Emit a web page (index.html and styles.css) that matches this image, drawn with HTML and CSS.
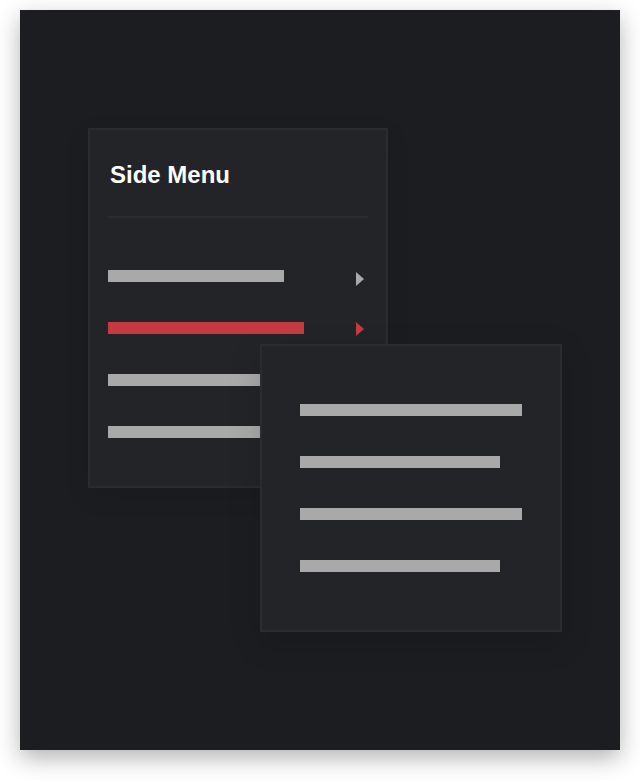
FILE: index.html
```html
<!DOCTYPE html>
<html lang="en">
<head>
    <meta charset="UTF-8">
    <meta name="viewport" content="width=device-width, initial-scale=1.0">
    <title>Side Menu</title>
    <link rel="stylesheet" href="styles.css">
</head>
<body>
    <div class="frame">
        <div class="side-menu">
            <h2 class="menu-title">Side Menu</h2>
            <ul class="menu-list">
                <li class="menu-item"><span class="bar" style="width: 176px"></span><span class="arrow"></span></li>
                <li class="menu-item active"><span class="bar" style="width: 196px"></span><span class="arrow"></span></li>
                <li class="menu-item"><span class="bar" style="width: 196px"></span><span class="arrow"></span></li>
                <li class="menu-item"><span class="bar" style="width: 176px"></span><span class="arrow"></span></li>
            </ul>
        </div>

        <!-- submenu of the active item -->
        <div class="submenu">
            <ul class="submenu-list">
                <li><span class="bar" style="width: 222px"></span></li>
                <li><span class="bar" style="width: 200px"></span></li>
                <li><span class="bar" style="width: 222px"></span></li>
                <li><span class="bar" style="width: 200px"></span></li>
            </ul>
        </div>
    </div>
</body>
</html>
```

FILE: styles.css
```css
body {
    font-family: 'Liberation Sans', Arial, sans-serif;
    margin: 0;
    padding: 10px 20px 30px;
    background-color: #ffffff;
}

.frame {
    position: relative;
    width: 600px;
    height: 740px;
    background-color: #1c1d20;
    box-shadow: 0 8px 22px rgba(0, 0, 0, 0.3);
    overflow: hidden;
    display: flex;
    align-items: flex-start;
}

.side-menu {
    margin: 118px 0 0 68px;
    width: 260px;
    height: 356px;
    padding: 0 18px;
    background-color: #232428;
    border: 2px solid #2b2c30;
    box-shadow: 0 8px 24px rgba(0, 0, 0, 0.08);
}

.menu-title {
    margin: 0;
    padding: 31px 0 25px 2px;
    height: 30px;
    font-size: 24px;
    line-height: 28px;
    font-weight: bold;
    color: #ffffff;
    border-bottom: 2px solid #2a2b2f;
}

.menu-list {
    list-style: none;
    margin: 52px 0 0;
    padding: 0;
    display: flex;
    flex-direction: column;
    gap: 40px;
}

.menu-item {
    display: flex;
    justify-content: space-between;
    align-items: flex-start;
    height: 12px;
    padding-right: 4px;
}

.bar {
    display: block;
    height: 12px;
    background-color: #a9a9a9;
}

.arrow {
    width: 0;
    height: 0;
    margin-top: 2px;
    border-top: 7px solid transparent;
    border-bottom: 7px solid transparent;
    border-left: 8px solid #a9a9a9;
}

.menu-item.active .bar {
    background-color: #c43c3f;
}

.menu-item.active .arrow {
    margin-top: 0;
    border-left-color: #c43c3f;
}

.submenu {
    position: absolute;
    left: 240px;
    top: 334px;
    width: 298px;
    height: 284px;
    background-color: #232428;
    border: 2px solid #2b2c30;
    box-shadow: 0 10px 30px rgba(0, 0, 0, 0.15);
}

.submenu-list {
    list-style: none;
    margin: 0;
    padding: 58px 0 0 38px;
    display: flex;
    flex-direction: column;
    gap: 40px;
}

.submenu-list li {
    height: 12px;
}
```
